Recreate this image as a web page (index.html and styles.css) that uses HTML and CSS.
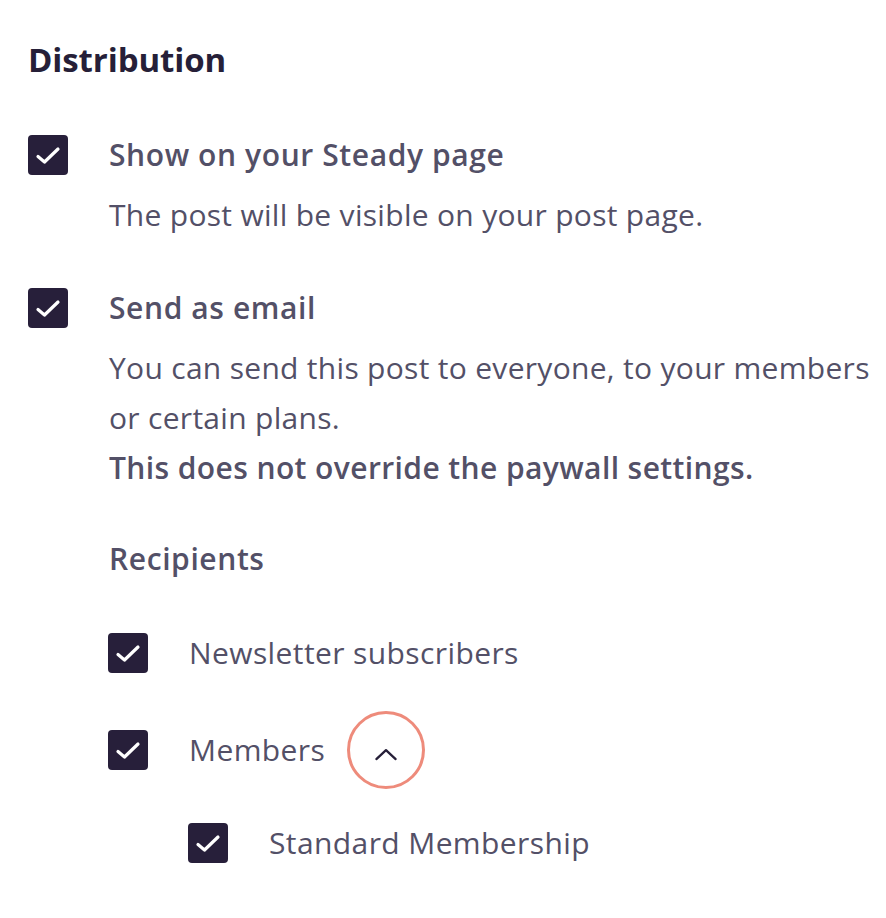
FILE: index.html
```html
<!DOCTYPE html>
<html lang="en">
<head>
<meta charset="utf-8">
<title>Distribution</title>
<link rel="stylesheet" href="styles.css">
</head>
<body>
<section class="panel">
  <h2 class="title">Distribution</h2>

  <div class="option option-first">
    <span class="box"><svg viewBox="0 0 40 40"><path d="M10 21.5 L16.5 27 L30 14"/></svg></span>
    <div class="content">
      <div class="label">Show on your Steady page</div>
      <p class="desc">The post will be visible on your post page.</p>
    </div>
  </div>

  <div class="option option-second">
    <span class="box"><svg viewBox="0 0 40 40"><path d="M10 21.5 L16.5 27 L30 14"/></svg></span>
    <div class="content">
      <div class="label">Send as email</div>
      <p class="desc">You can send this post to everyone, to your members or certain plans.<br><strong>This does not override the paywall settings.</strong></p>

      <div class="label recipients">Recipients</div>

      <div class="sub sub-first">
        <span class="box"><svg viewBox="0 0 40 40"><path d="M10 21.5 L16.5 27 L30 14"/></svg></span>
        <span class="sub-label">Newsletter subscribers</span>
      </div>
      <div class="sub sub-members">
        <span class="box"><svg viewBox="0 0 40 40"><path d="M10 21.5 L16.5 27 L30 14"/></svg></span>
        <span class="sub-label">Members</span>
        <span class="toggle"><svg viewBox="0 0 24 12"><path d="M1.5 11 L12 1.2 L22.5 11"/></svg></span>
      </div>
      <div class="sub sub-nested">
        <span class="box"><svg viewBox="0 0 40 40"><path d="M10 21.5 L16.5 27 L30 14"/></svg></span>
        <span class="sub-label">Standard Membership</span>
      </div>
    </div>
  </div>
</section>
</body>
</html>
```

FILE: styles.css
```css
* { box-sizing: border-box; }
html, body { margin: 0; padding: 0; background: #ffffff; }
body {
  font-family: "Open Sans", "Liberation Sans", sans-serif;
  color: #535067;
}
.panel {
  padding: 38px 0 0 28px;
}
.title {
  margin: 0;
  font-size: 33px;
  line-height: 44px;
  font-weight: 700;
  letter-spacing: -0.1px;
  color: #261f38;
}
.option {
  display: flex;
  align-items: flex-start;
  gap: 41px;
}
.option-first { margin-top: 53px; }
.option-second { margin-top: 48px; }
.box {
  flex: 0 0 40px;
  width: 40px;
  height: 40px;
  border-radius: 4px;
  background: #271f3a;
  display: flex;
}
.box svg { width: 40px; height: 40px; }
.box path {
  fill: none;
  stroke: #ffffff;
  stroke-width: 3.2;
  stroke-linecap: round;
  stroke-linejoin: round;
}
.content { display: flex; flex-direction: column; width: 775px; }
.label {
  font-size: 30px;
  line-height: 40px;
  font-weight: 600;
  letter-spacing: 0.6px;
}
.desc {
  margin: 15px 0 0;
  font-size: 30px;
  line-height: 50px;
  font-weight: 400;
  letter-spacing: 0.3px;
}
.desc strong { font-weight: 600; letter-spacing: 0.4px; }
.recipients { margin-top: 46px; }
.sub {
  display: flex;
  align-items: center;
  gap: 41px;
  margin-left: -1px;
  font-size: 30px;
  line-height: 40px;
  letter-spacing: 0.4px;
}
.sub-first { margin-top: 54px; }
.sub-members { margin-top: 57px; }
.sub-nested { margin-top: 53px; margin-left: 79px; }
.toggle {
  margin: -19px 0 -19px -19px;
  width: 78px;
  height: 78px;
  border-radius: 50%;
  border: 3px solid #ee8b7b;
  display: flex;
  align-items: center;
  justify-content: center;
}
.toggle svg { width: 22px; height: 11px; margin-top: 9px; overflow: visible; }
.toggle path {
  fill: none;
  stroke: #261f38;
  stroke-width: 2.5;
  stroke-linecap: round;
  stroke-linejoin: round;
}
```
